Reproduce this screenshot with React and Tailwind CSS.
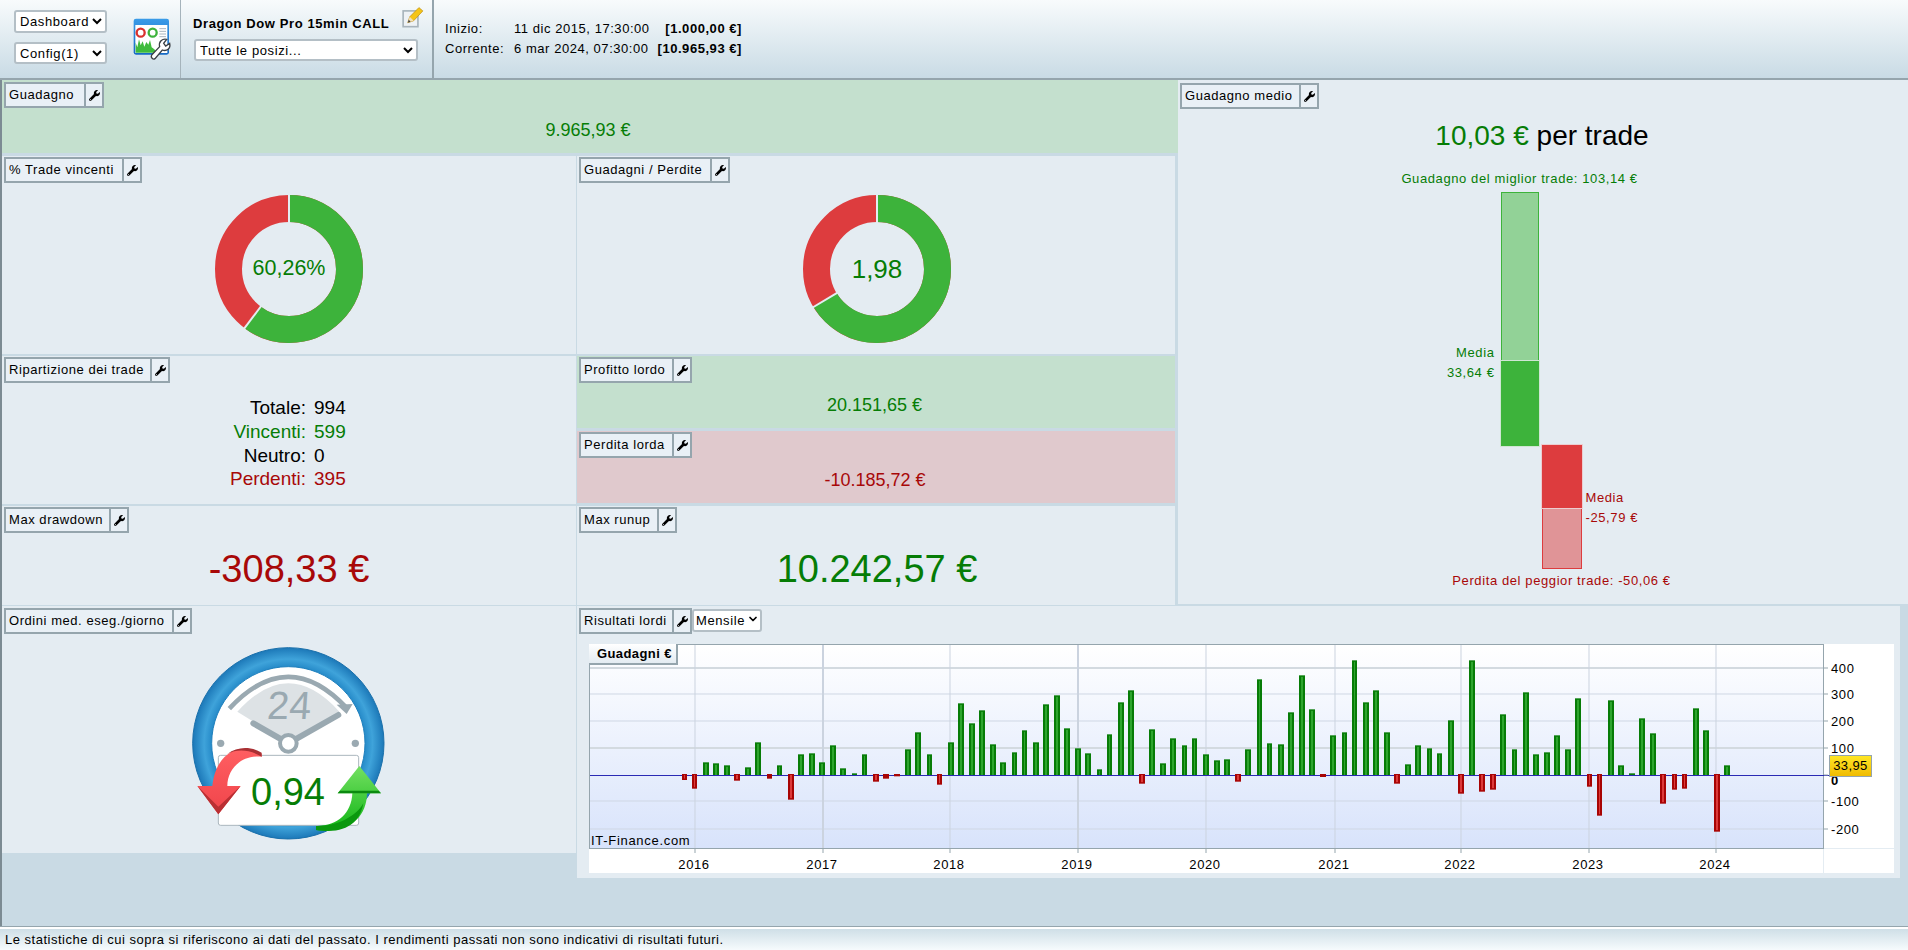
import React from "react";
import { FaWrench } from "react-icons/fa";
import { ChevronDown } from "lucide-react";

const G = "text-[#067d06]";
const R = "text-[#a80808]";

function Tab({ label, widthClass }) {
  return (
    <div className={`flex h-[26px] shrink-0 border-2 border-[#95a5ad] bg-[#e9f0f6] text-[13px] tracking-[0.55px] text-black ${widthClass}`}>
      <div className="flex min-w-0 flex-1 items-center whitespace-nowrap pl-[3px]">{label}</div>
      <div className="flex w-[18px] shrink-0 items-center justify-center border-l-2 border-[#95a5ad]">
        <FaWrench className="size-[11px] text-black" />
      </div>
    </div>
  );
}

function Donut({ pct, value, valueClass }) {
  const r = 60.5;
  const c = 2 * Math.PI * r;
  const a = (pct / 100) * 2 * Math.PI;
  const sx = Math.sin(a);
  const sy = -Math.cos(a);
  return (
    <div className="relative h-[148px] w-[148px]">
      <svg width="148" height="148" viewBox="-74 -74 148 148">
        <circle r={r} fill="none" stroke="#dd3c3e" strokeWidth="27" />
        <circle r={r} fill="none" stroke="#3db33b" strokeWidth="27" strokeDasharray={`${(pct / 100) * c} ${c}`} transform="rotate(-90)" />
        <line x1="0" y1="-46" x2="0" y2="-75" stroke="#e4ecf2" strokeWidth="2" />
        <line x1={sx * 46} y1={sy * 46} x2={sx * 75} y2={sy * 75} stroke="#e4ecf2" strokeWidth="2" />
      </svg>
      <div className={`absolute inset-0 flex items-center justify-center ${valueClass}`}>{value}</div>
    </div>
  );
}

const groups = [
  [570, [[344,540],[374,566],[408,487],[438,490],[471,496],[501,542],[534,502],[564,427],[598,536],[628,496],[663,599],[693,463],[726,460],[756,487],[789,436],[819,505],[853,520],[883,463],[918,545],[948,536],[981,529],[1014,448],[1044,397],[1078,463],[1108,554],[1143,427],[1173,310],[1206,370],[1236,331],[1269,433],[1299,487],[1333,457],[1363,391],[1398,427],[1428,313],[1461,286],[1491,385]]],
  [1060, [[54,445],[84,460],[118,508],[148,403],[183,307],[213,271],[246,551],[276,388],[309,490],[339,415],[373,436],[403,415],[438,463],[471,481],[501,478],[534,545],[564,448],[598,238],[628,430],[663,433],[693,337],[726,226],[756,328],[789,531],[819,406],[853,397],[883,181],[918,307],[948,271],[981,397],[1011,551],[1044,493],[1074,436],[1108,445],[1138,460],[1173,361],[1203,581],[1236,181],[1266,575],[1299,569]]],
  [1500, [[9,343],[43,448],[78,277],[108,463],[141,457],[171,406],[204,448],[234,295],[268,560],[298,647],[333,301],[363,496],[396,520],[426,355],[459,400],[489,611],[523,569],[553,566],[588,325],[618,391],[651,695],[681,496]]],
];

const bars = groups.flatMap(([base, list]) =>
  list.map(([zx, zy]) => {
    const w = zx % 3 === 0 ? 6 : 5;
    const x = Math.round(base + zx / 3 - w / 2);
    const y = 600 + zy / 3;
    const up = zy < 526;
    return { x, w, up, top: up ? y : 774, h: up ? 775 - y : y - 774 };
  })
);

const years = [[695, "2016", 1], [823, "2017", 2], [950, "2018", 1], [1078, "2019", 2], [1206, "2020", 1], [1335, "2021", 1], [1461, "2022", 1], [1589, "2023", 1], [1716, "2024", 1]];
const ys = [[668, "400", 2], [694, "300", 1], [721, "200", 1], [748, "100", 2], [801, "-100", 1], [829, "-200", 1]];

function Chart() {
  return (
    <div className="relative h-[229px] w-[1305px] bg-white">
      <svg width="1305" height="229" viewBox="589 644 1305 229" className="block">
        <defs>
          <linearGradient id="plot" x1="0" y1="0" x2="0" y2="1">
            <stop offset="0" stopColor="#ffffff" />
            <stop offset="1" stopColor="#d8e3fb" />
          </linearGradient>
        </defs>
        <rect x="589.5" y="644.5" width="1234" height="204" fill="url(#plot)" stroke="#95a5ad" />
        {ys.map(([y, t, w]) => (
          <line key={t} x1="590" x2="1823" y1={y} y2={y} stroke={w === 2 ? "#d3dae0" : "#cfd7e4"} strokeWidth={w} />
        ))}
        {years.map(([x, t, w]) => (
          <line key={t} x1={x} x2={x} y1="645" y2="848" stroke="#cbd3df" strokeWidth={w} />
        ))}
        <line x1="590" x2="1829" y1="775.5" y2="775.5" stroke="#2a2ab4" />
        {bars.map((b, i) => (
          <g key={i}>
            <rect x={b.x} y={b.top} width={b.w} height={b.h} fill={b.up ? "#077c07" : "#a80404"} />
            {b.h > 5 && (
              <rect x={b.x + 2} y={b.top + (b.up ? 1.5 : 1)} width={b.w - 4} height={b.h - (b.up ? 1.5 : 2.5)} fill={b.up ? "#2ea52e" : "#dc3a3a"} />
            )}
          </g>
        ))}
        <line x1="1824" x2="1894" y1="848.5" y2="848.5" stroke="#e4ecf2" />
        <line x1="1823.5" x2="1823.5" y1="849" y2="873" stroke="#e4ecf2" />
        {years.map(([x, t]) => (
          <g key={t}>
            <line x1={x} x2={x} y1="849" y2="853" stroke="#95a5ad" />
            <text x={x - 1} y="869" textAnchor="middle" fontSize="13" letterSpacing="0.6" fill="#000">{t}</text>
          </g>
        ))}
        {ys.map(([y, t]) => (
          <g key={t}>
            <line x1="1824" x2="1828" y1={y} y2={y} stroke="#95a5ad" />
            <text x="1831" y={y + 5} fontSize="13" letterSpacing="0.6" fill="#000">{t}</text>
          </g>
        ))}
        <line x1="1824" x2="1828" y1="775" y2="775" stroke="#95a5ad" />
      </svg>
      <div className="absolute left-0 top-0 flex h-[21px] w-[89px] items-center whitespace-nowrap border-b-2 border-r-2 border-[#95a5ad] bg-gradient-to-b from-white to-[#e4ecf2] pl-[8px] text-[13px] font-bold tracking-[0.4px] text-black">
        Guadagni €
      </div>
      <div className="absolute bottom-[25px] left-[2px] whitespace-nowrap text-[13px] leading-[15px] tracking-[0.7px] text-black">IT-Finance.com</div>
      <div className="absolute left-[1242px] top-[130px] text-[13px] font-bold leading-[13px] text-black">0</div>
      <div className="absolute left-[1240px] top-[111px] flex h-[22px] w-[43px] items-center justify-center border border-[#95a5ad] bg-gradient-to-b from-[#ffe622] to-[#f0bb00] text-[13px] tracking-[0.4px] text-black">
        33,95
      </div>
    </div>
  );
}

function AppIcon() {
  return (
    <svg width="60" height="55" viewBox="0 0 180 165" className="ml-[18px] mt-[10px] shrink-0">
      <defs>
        <linearGradient id="ti" x1="0" y1="0" x2="0" y2="1">
          <stop offset="0" stopColor="#3a9be8" />
          <stop offset="1" stopColor="#1569c4" />
        </linearGradient>
      </defs>
      <rect x="26" y="26" width="106" height="108" rx="7" fill="url(#ti)" />
      <rect x="31" y="45" width="96" height="84" fill="#ffffff" />
      <circle cx="47" cy="68" r="12" fill="none" stroke="#d9322f" strokeWidth="7" />
      <circle cx="83" cy="68" r="12" fill="none" stroke="#3eb33c" strokeWidth="7" />
      <path d="M103 56h20M103 64h20M103 72h20M103 80h20" stroke="#a9b5bf" strokeWidth="3" />
      <path d="M32 128 V98 L37 112 L42 88 L47 106 L53 94 L58 110 L64 96 L70 104 L75 90 L80 112 L88 118 L96 128 Z" fill="#3fbb3c" />
      <path d="M80 135 L104 110 C100 95 112 85 125 88 L116 100 L122 108 L134 100 C138 115 125 125 112 120 L90 146 C84 150 76 142 80 135 Z" fill="#ffffff" stroke="#3a3f44" strokeWidth="4" />
    </svg>
  );
}

function PencilIcon() {
  return (
    <svg width="24" height="25" viewBox="18 12 72 76" className="ml-[12px] mt-[3px] shrink-0">
      <rect x="24" y="36" width="45" height="48" fill="#eef2f5" stroke="#a8b4bc" strokeWidth="5" />
      <path d="M38 72 L44 54 L72 26 L84 36 L56 66 Z" fill="#f5c518" stroke="#b98a10" strokeWidth="2" />
      <path d="M38 72 L44 54 L56 66 Z" fill="#f3dfb8" />
      <path d="M38 72 L41 63 L47 69 Z" fill="#444" />
    </svg>
  );
}

function ClockIcon() {
  return (
    <div className="relative h-[220px] w-[260px]">
      <svg width="260" height="220" viewBox="0 0 780 660" className="block">
        <defs>
          <radialGradient id="ring" cx="0.5" cy="0.5" r="0.5">
            <stop offset="0.78" stopColor="#1f84c4" />
            <stop offset="0.88" stopColor="#3fa3da" />
            <stop offset="1" stopColor="#1c78b8" />
          </radialGradient>
          <linearGradient id="redA" x1="0" y1="0" x2="0" y2="1">
            <stop offset="0" stopColor="#ff5f62" />
            <stop offset="1" stopColor="#f0444a" />
          </linearGradient>
          <linearGradient id="grnA" x1="0" y1="0" x2="0" y2="1">
            <stop offset="0" stopColor="#74e062" />
            <stop offset="1" stopColor="#10b515" />
          </linearGradient>
        </defs>
        <circle cx="415" cy="340" r="287" fill="url(#ring)" stroke="#1a70ab" strokeWidth="3" />
        <circle cx="415" cy="340" r="230" fill="#ffffff" stroke="#1f80bd" strokeWidth="3" />
        <path d="M415 340 L262 245 Q415 75 568 245 Z" fill="#dde2e5" />
        <path d="M238 236 Q415 45 592 236" fill="none" stroke="#9aa9b1" strokeWidth="14" />
        <path d="M560 224 L608 222 L590 252 Z" fill="#9aa9b1" />
        <g transform="skewX(-4) translate(19 0)">
          <text x="415" y="268" textAnchor="middle" fontSize="118" fill="#9aa9b1">24</text>
        </g>
        <path d="M415 340 L310 280 M415 340 L565 255" stroke="#9aa9b1" strokeWidth="18" strokeLinecap="round" />
        <circle cx="415" cy="340" r="25" fill="#ffffff" stroke="#9aa9b1" strokeWidth="12" />
        <circle cx="212" cy="340" r="11" fill="#9aa9b1" />
        <circle cx="616" cy="340" r="11" fill="#9aa9b1" />
        <rect x="205" y="376" width="421" height="210" rx="7" fill="#ffffff" stroke="#aab6bd" strokeWidth="3" />
        <path d="M335 372 C290 340 200 350 187 468 L142 468 L205 553 L272 468 L232 468 C232 420 270 375 335 380 Z" fill="url(#redA)" />
        <path d="M335 368 C300 348 262 350 232 372 C265 355 300 360 335 380 Z" fill="#a93034" />
        <path d="M142 468 L205 553 L272 468 L205 530 Z" fill="#b92f33" />
        <path d="M628 408 L693 490 L651 490 C650 560 600 612 498 600 L498 588 C560 590 605 550 607 490 L563 490 Z" fill="url(#grnA)" />
        <path d="M563 490 L693 490 L686 482 L570 482 Z" fill="#0b8a0f" />
        <path d="M498 588 C560 590 618 560 640 520 C630 575 590 615 498 600 Z" fill="#0a980e" />
      </svg>
      <div className={`absolute inset-x-0 top-[138px] pl-[16px] text-center text-[38px] leading-[48px] ${G}`}>0,94</div>
    </div>
  );
}

export default function App() {
  const selectClass = "rounded-[3px] border-2 border-[#b4bfc6] bg-white text-[13px] tracking-[0.6px] text-black";
  return (
    <div className="flex h-[950px] w-[1908px] flex-col overflow-hidden bg-[#c9dae4] font-[Liberation_Sans,Arial,sans-serif]">
      <header className="flex h-[80px] shrink-0 border-b-2 border-[#95a5ad] bg-gradient-to-b from-[#f8fbfc] to-[#c9dbe5]">
        <div className="flex w-[181px] shrink-0 border-r border-[#a5b3bb]">
          <div className="ml-[14px] mt-[10px] flex w-[93px] shrink-0 flex-col gap-[9px]">
            <select className={`h-[23px] w-full ${selectClass}`} defaultValue="Dashboard"><option>Dashboard</option></select>
            <select className={`h-[22px] w-full ${selectClass}`} defaultValue="Config(1)"><option>Config(1)</option></select>
          </div>
          <AppIcon />
        </div>
        <div className="flex w-[253px] shrink-0 flex-col border-r-2 border-[#95a5ad] pl-[12px]">
          <div className="flex h-[39px] items-start">
            <div className="mt-[16px] whitespace-nowrap text-[13px] font-bold leading-[16px] tracking-[0.6px] text-black">Dragon Dow Pro 15min CALL</div>
            <PencilIcon />
          </div>
          <select className={`ml-px h-[22px] w-[224px] ${selectClass}`} defaultValue="Tutte le posizi..."><option>Tutte le posizi...</option></select>
        </div>
        <div className="ml-[11px] mt-[19px] text-[13px] leading-[20px] tracking-[0.55px] text-black">
          <div className="grid grid-cols-[69px_228px]">
            <div>Inizio:</div>
            <div className="flex justify-between"><span>11 dic 2015, 17:30:00</span><b>[1.000,00 €]</b></div>
            <div>Corrente:</div>
            <div className="flex justify-between"><span>6 mar 2024, 07:30:00</span><b>[10.965,93 €]</b></div>
          </div>
        </div>
      </header>

      <main className="flex h-[847px] shrink-0 flex-col border-l-2 border-[#7c8b93]">
        <div className="flex h-[526px] shrink-0">
          <div className="flex w-[1176px] shrink-0 flex-col">
            <section className="flex h-[73px] shrink-0 flex-col bg-[#c4e0ce] pl-[2px] pt-[2px]">
              <Tab label="Guadagno" widthClass="w-[100px]" />
              <div className={`flex flex-1 items-center justify-center pr-[6px] text-[18px] ${G}`}>9.965,93 €</div>
            </section>
            <div className="mt-[3px] flex h-[198px] shrink-0 gap-px">
              <section className="flex w-[574px] shrink-0 flex-col bg-[#e4ecf2] pl-[2px] pt-px">
                <Tab label="% Trade vincenti" widthClass="w-[138px]" />
                <div className="flex flex-1 items-center justify-center pr-[2px]">
                  <Donut pct={60.26} value="60,26%" valueClass={`text-[21.5px] ${G}`} />
                </div>
              </section>
              <section className="flex w-[598px] shrink-0 flex-col bg-[#e4ecf2] pl-[2px] pt-px">
                <Tab label="Guadagni / Perdite" widthClass="w-[151px]" />
                <div className="flex flex-1 items-center justify-center">
                  <Donut pct={66.42} value="1,98" valueClass={`pt-[2px] text-[26px] ${G}`} />
                </div>
              </section>
            </div>
            <div className="mt-[2px] flex h-[148px] shrink-0 gap-px">
              <section className="flex w-[574px] shrink-0 flex-col bg-[#e4ecf2] pl-[2px] pt-px">
                <Tab label="Ripartizione dei trade" widthClass="w-[166px]" />
                <div className="flex flex-1 items-center">
                  <div className="-ml-[2px] grid grid-cols-[304px_1fr] text-[19px] leading-[23.6px] text-black">
                    <div className="text-right">Totale:</div><div className="pl-[8px]">994</div>
                    <div className={`text-right ${G}`}>Vincenti:</div><div className={`pl-[8px] ${G}`}>599</div>
                    <div className="text-right">Neutro:</div><div className="pl-[8px]">0</div>
                    <div className={`text-right ${R}`}>Perdenti:</div><div className={`pl-[8px] ${R}`}>395</div>
                  </div>
                </div>
              </section>
              <div className="flex w-[598px] shrink-0 flex-col gap-[3px]">
                <section className="flex h-[72px] flex-col bg-[#c4e0ce] pl-[2px] pt-px">
                  <Tab label="Profitto lordo" widthClass="w-[113px]" />
                  <div className={`flex flex-1 items-center justify-center pr-[5px] text-[18px] ${G}`}>20.151,65 €</div>
                </section>
                <section className="flex h-[72px] flex-col bg-[#e0c9cd] pl-[2px] pt-px">
                  <Tab label="Perdita lorda" widthClass="w-[113px]" />
                  <div className={`flex flex-1 items-center justify-center pr-[4px] text-[18px] ${R}`}>-10.185,72 €</div>
                </section>
              </div>
            </div>
            <div className="mt-[2px] flex h-[99px] shrink-0 gap-px">
              <section className="flex w-[574px] shrink-0 flex-col bg-[#e4ecf2] pl-[2px] pt-px">
                <Tab label="Max drawdown" widthClass="w-[125px]" />
                <div className={`flex flex-1 items-center justify-center pr-[2px] pt-[1px] text-[38px] ${R}`}>-308,33 €</div>
              </section>
              <section className="flex w-[598px] shrink-0 flex-col bg-[#e4ecf2] pl-[2px] pt-px">
                <Tab label="Max runup" widthClass="w-[98px]" />
                <div className={`flex flex-1 items-center justify-center pt-[1px] text-[38px] ${G}`}>10.242,57 €</div>
              </section>
            </div>
          </div>

          <section className="flex h-[524px] w-[730px] shrink-0 flex-col bg-[#e4ecf2] pl-[2px] pt-[3px]">
            <Tab label="Guadagno medio" widthClass="w-[139px]" />
            <div className="mt-[11px] pr-[4px] text-center text-[28px] leading-[32px] text-black"><span className={G}>10,03 €</span> per trade</div>
            <div className="mt-[19px] flex justify-center pr-[6px] text-[13px] leading-[20px] tracking-[0.6px]">
              <div className="flex w-[38px] shrink-0 flex-col items-center">
                <div className={`mb-[5px] h-[16px] whitespace-nowrap leading-[16px] ${G}`}>Guadagno del miglior trade: 103,14 €</div>
                <div className="relative w-[38px]">
                  <div className="h-[169px] border border-b-0 border-[#3db33b] bg-[#92d297]" />
                  <div className="h-[85px] bg-[#3db33b] outline outline-1 outline-[#cfe6d3]" />
                  <div className={`absolute right-[44px] top-[151px] whitespace-nowrap text-right ${G}`}>Media<br />33,64 €</div>
                </div>
              </div>
              <div className="ml-[3px] mt-[274px] flex w-[40px] shrink-0 flex-col items-center">
                <div className="relative w-[40px]">
                  <div className="h-[63px] bg-[#dd3c3e] outline outline-1 outline-[#eccdd0]" />
                  <div className="h-[61px] border border-t-0 border-[#dd3c3e] bg-[#e09497]" />
                  <div className={`absolute left-[44px] top-[43px] whitespace-nowrap ${R}`}>Media<br />-25,79 €</div>
                </div>
                <div className={`mt-[4px] whitespace-nowrap leading-[16px] ${R}`}>Perdita del peggior trade: -50,06 €</div>
              </div>
            </div>
          </section>
        </div>

        <div className="flex gap-px">
          <section className="flex h-[247px] w-[574px] shrink-0 flex-col bg-[#e4ecf2] pl-[2px] pt-[2px]">
            <Tab label="Ordini med. eseg./giorno" widthClass="w-[188px]" />
            <div className="-mt-[4px] pl-[146px]"><ClockIcon /></div>
          </section>
          <section className="flex h-[272px] w-[1323px] shrink-0 flex-col bg-[#e4ecf2] pl-[2px] pt-[2px]">
            <div className="flex items-start">
              <Tab label="Risultati lordi" widthClass="w-[113px]" />
              <div className="relative w-[70px]">
                <select className={`h-[23px] w-full appearance-none pl-[2px] ${selectClass}`} defaultValue="Mensile"><option>Mensile</option></select>
                <ChevronDown className="pointer-events-none absolute right-[3px] top-[5px] size-[12px] text-black" strokeWidth={3.5} />
              </div>
            </div>
            <div className="ml-[10px] mt-[10px]"><Chart /></div>
          </section>
        </div>
      </main>

      <footer className="flex flex-1 items-center border-t-2 border-white bg-gradient-to-b from-[#cfdfe7] to-[#f6fbfd] pl-[5px] text-[13px] tracking-[0.5px] text-black shadow-[0_-1px_0_#95a5ad]">
        Le statistiche di cui sopra si riferiscono ai dati del passato. I rendimenti passati non sono indicativi di risultati futuri.
      </footer>
    </div>
  );
}
